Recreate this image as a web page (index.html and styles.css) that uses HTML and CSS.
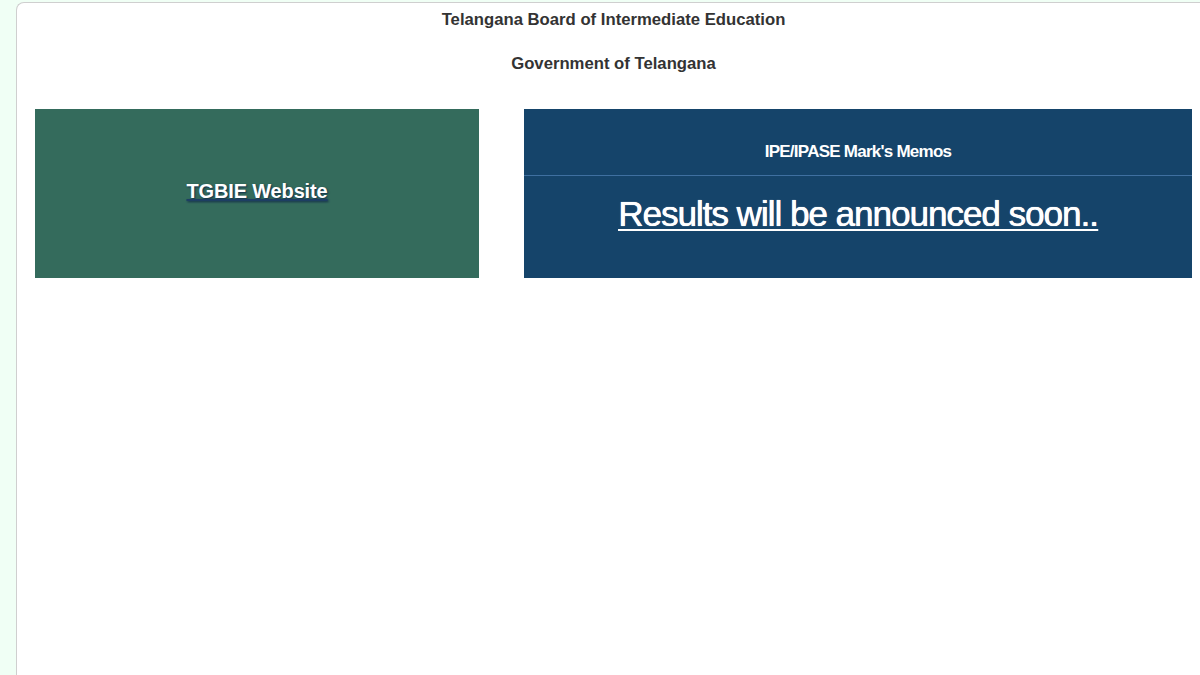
FILE: index.html
```html
<!DOCTYPE html>
<html lang="en">
<head>
<meta charset="utf-8">
<title>TGBIE Results</title>
<link rel="stylesheet" href="styles.css">
</head>
<body>
<div class="page">
  <div class="panel">
    <header class="head">
      <h1 class="title">Telangana Board of Intermediate Education</h1>
      <h2 class="subtitle">Government of Telangana</h2>
    </header>
    <div class="cards">
      <div class="card card-green">
        <a class="site-link" href="#">TGBIE Website</a>
      </div>
      <div class="card card-blue">
        <div class="card-head">IPE/IPASE Mark's Memos</div>
        <div class="card-body">
          <a class="result-link" href="#">Results will be announced soon..</a>
        </div>
      </div>
    </div>
  </div>
</div>
</body>
</html>
```
FILE: styles.css
```css
html, body {
  margin: 0;
  padding: 0;
  height: 100%;
  overflow: hidden;
}
body {
  background: #f0fff5;
  font-family: "Liberation Sans", Arial, sans-serif;
}
.page {
  padding: 2px 0 0 16px;
  height: 100%;
  box-sizing: border-box;
}
.panel {
  width: 1194px;
  height: 100%;
  box-sizing: border-box;
  background: #fff;
  border: 1px solid #cfcfcf;
  border-right: none;
  border-bottom: none;
  border-top-left-radius: 8px;
  padding: 0 18px 0 18px;
}
.head {
  text-align: center;
  color: #333;
}
.title {
  margin: 0;
  padding-top: 7px;
  font-size: 16.7px;
  font-weight: bold;
  line-height: 20px;
}
.subtitle {
  margin: 24px 0 0 0;
  font-size: 16.7px;
  font-weight: bold;
  line-height: 20px;
}
.cards {
  display: grid;
  grid-template-columns: 444px 668px;
  column-gap: 45px;
  margin-top: 35px;
}
.card {
  height: 169px;
  color: #fff;
}
.card-green {
  background: #346b5c;
  display: flex;
  align-items: center;
  justify-content: center;
  padding-bottom: 4px;
  box-sizing: border-box;
}
.site-link {
  color: #fff;
  font-size: 20px;
  font-weight: bold;
  letter-spacing: -0.15px;
  text-decoration: underline;
  text-decoration-color: #1d3e63;
  text-shadow: 1px 1px 2px #102a48;
}
.card-blue {
  background: #15446a;
  display: flex;
  flex-direction: column;
}
.card-head {
  height: 67px;
  box-sizing: border-box;
  padding-top: 33px;
  text-align: center;
  font-size: 17px;
  font-weight: bold;
  letter-spacing: -0.75px;
  line-height: 20px;
  border-bottom: 1px solid #3f70a0;
}
.card-body {
  text-align: center;
  padding-top: 18px;
}
.result-link {
  color: #fff;
  font-size: 35px;
  letter-spacing: -1px;
  line-height: 40px;
  text-decoration: underline;
  text-decoration-thickness: 2px;
  text-underline-offset: 3px;
  text-shadow: 0 0 1px rgba(255,255,255,0.8), 0.3px 0 0 #fff;
}
```
